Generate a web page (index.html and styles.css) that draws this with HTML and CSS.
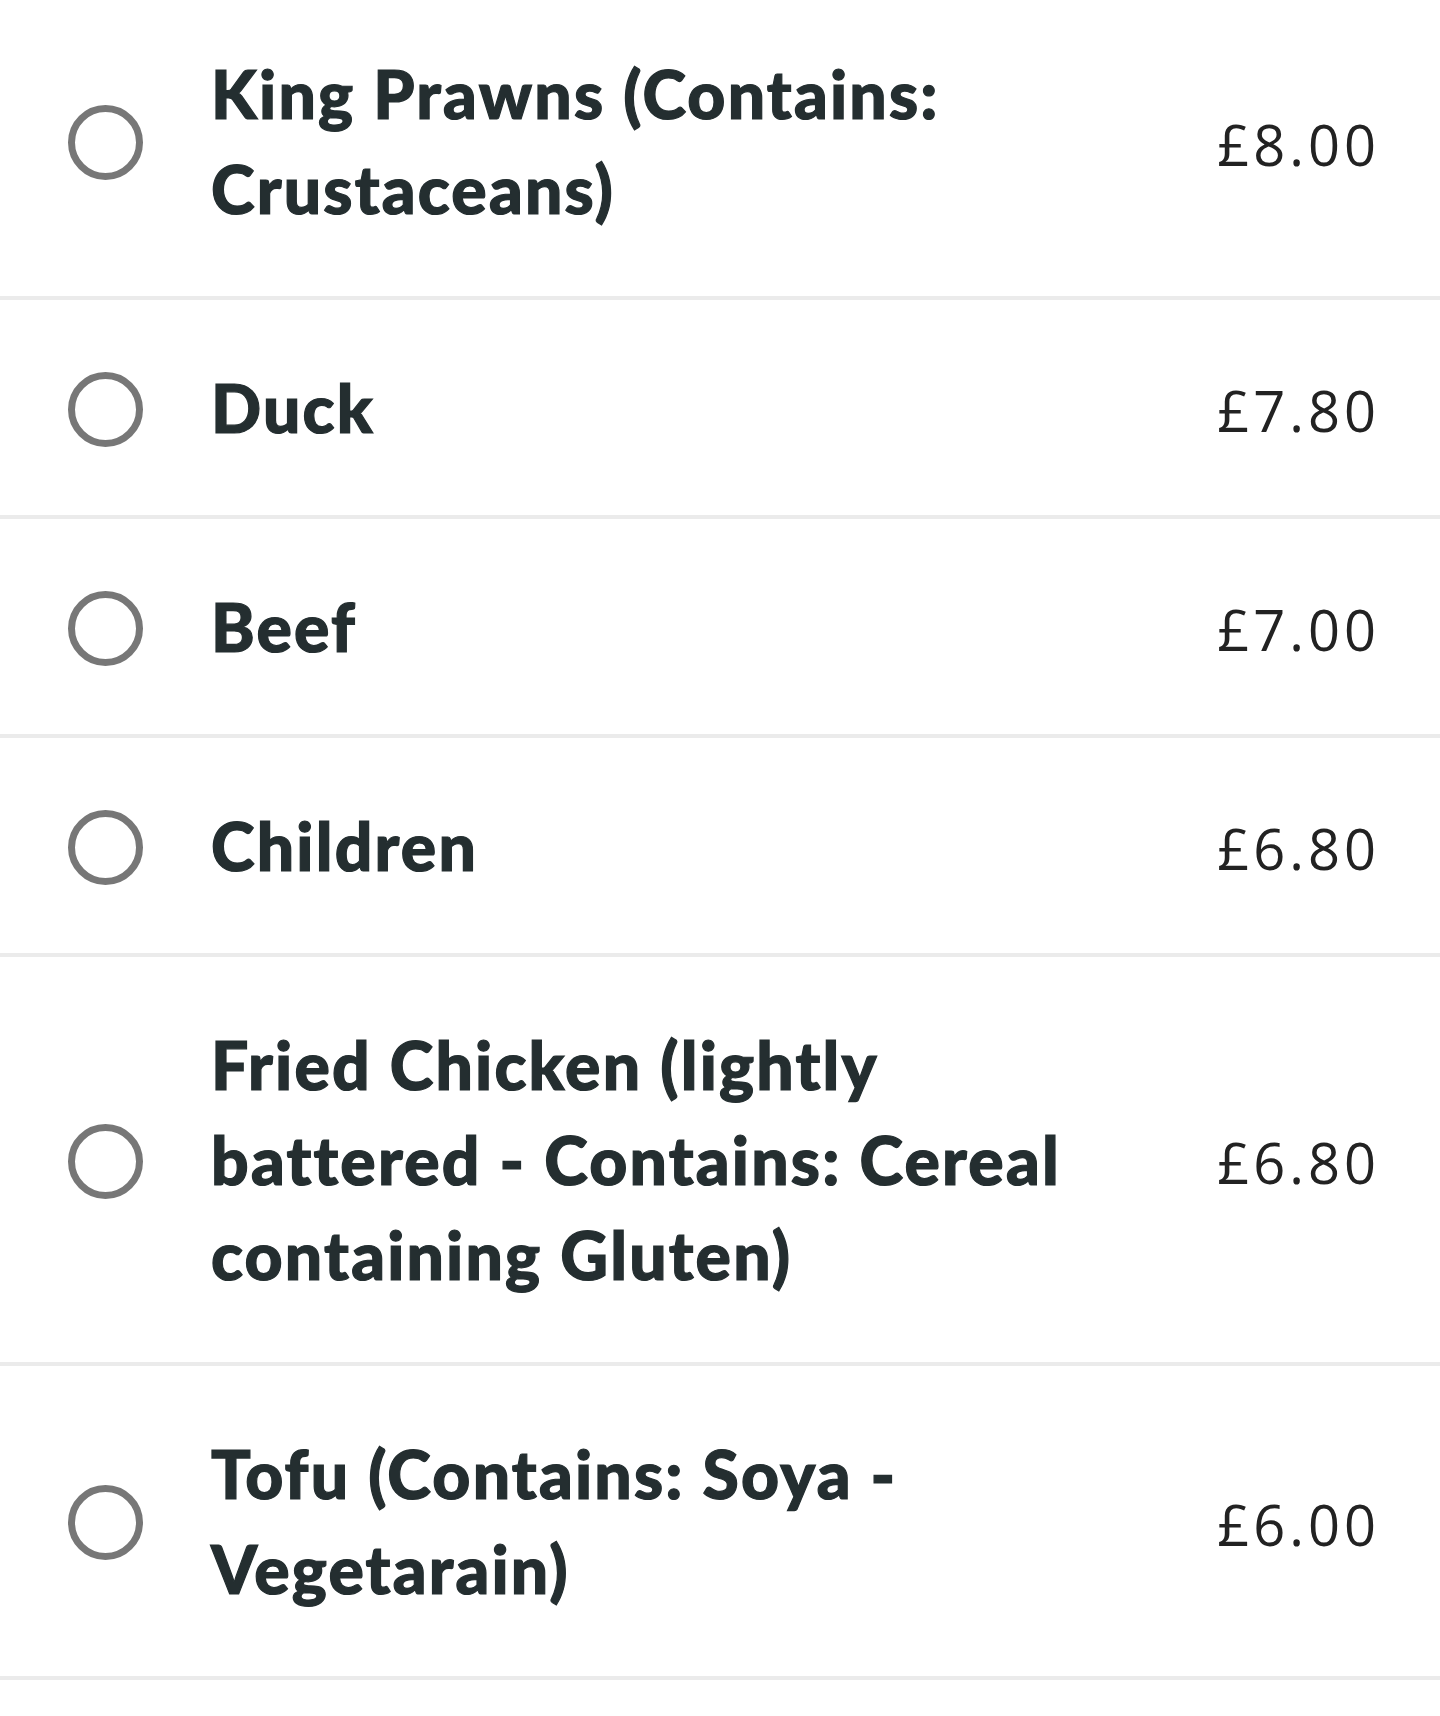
FILE: index.html
```html
<!DOCTYPE html>
<html lang="en">
<head>
<meta charset="utf-8">
<title>Options</title>
<link rel="stylesheet" href="styles.css">
</head>
<body>
<ul class="options">
  <li class="option">
    <span class="radio"></span>
    <span class="name">King Prawns (Contains: Crustaceans)</span>
    <span class="price">£8.00</span>
  </li>
  <li class="option">
    <span class="radio"></span>
    <span class="name">Duck</span>
    <span class="price">£7.80</span>
  </li>
  <li class="option">
    <span class="radio"></span>
    <span class="name">Beef</span>
    <span class="price">£7.00</span>
  </li>
  <li class="option">
    <span class="radio"></span>
    <span class="name">Children</span>
    <span class="price">£6.80</span>
  </li>
  <li class="option">
    <span class="radio"></span>
    <span class="name">Fried Chicken (lightly battered - Contains: Cereal containing Gluten)</span>
    <span class="price">£6.80</span>
  </li>
  <li class="option">
    <span class="radio"></span>
    <span class="name">Tofu (Contains: Soya - Vegetarain)</span>
    <span class="price">£6.00</span>
  </li>
</ul>
</body>
</html>
```

FILE: styles.css
```css
html, body {
  margin: 0;
  padding: 0;
  background: #ffffff;
}

body {
  font-family: "Lato", "Liberation Sans", sans-serif;
  color: #242e30;
}

.options {
  list-style: none;
  margin: 0;
  padding: 0;
}

.option {
  display: flex;
  align-items: center;
  padding: 60px 60px 60px 68px;
  border-bottom: 4px solid #ebebeb;
}

.option:first-child {
  padding-top: 46px;
}

.radio {
  flex: 0 0 auto;
  width: 75px;
  height: 75px;
  box-sizing: border-box;
  border: 7px solid #777777;
  border-radius: 50%;
  margin-top: 3px;
}

.name {
  flex: 1 1 auto;
  margin-left: 68px;
  margin-right: 110px;
  font-size: 66px;
  font-weight: 900;
  letter-spacing: 2.2px;
  line-height: 95px;
  -webkit-text-stroke: 1.2px #242e30;
}

.price {
  flex: 0 0 auto;
  font-family: "Open Sans", "Liberation Sans", sans-serif;
  font-size: 56px;
  font-weight: 400;
  letter-spacing: 4px;
  line-height: 90px;
  padding-top: 5px;
  color: #222222;
}
```
